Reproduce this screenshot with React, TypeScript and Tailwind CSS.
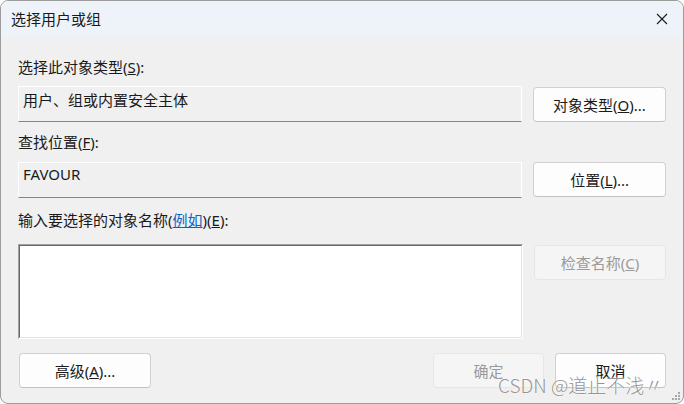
import React from "react";

const font = { fontFamily: '"Noto Sans", "Noto Sans CJK SC", sans-serif' };

function Btn({ children, w, disabled }: { children: React.ReactNode; w: string; disabled?: boolean }) {
  return (
    <div
      className={`${w} h-[35px] flex items-center justify-center rounded-[4px] border text-[15px] leading-5 ${
        disabled
          ? "bg-[#f5f5f5] border-[#e6e6e6] text-[#9a9a9a]"
          : "bg-[#fdfdfd] border-[#d0d0d0] border-b-[#c2c2c2] text-[#1a1a1a]"
      }`}
    >
      {children}
    </div>
  );
}

export default function App() {
  return (
    <div className="w-[684px] h-[404px] bg-white" style={font}>
      <div className="relative w-[684px] h-[404px] rounded-[8px] border border-[#9c9c9c] bg-[#f0f0f0] overflow-hidden text-[#1a1a1a]">
        {/* Title bar */}
        <div className="h-[36px] bg-[#eef2f9] flex items-center justify-between pl-[10px] pr-[14px]">
          <span className="text-[15px] leading-5">选择用户或组</span>
          <svg width="12" height="12" viewBox="0 0 12 12" className="mr-[1px]">
            <path d="M1 1 L11 11 M11 1 L1 11" stroke="#1a1a1a" strokeWidth="1.1" fill="none" />
          </svg>
        </div>

        <div className="pl-[17px] pr-[17px]">
          <div className="mt-[20px] h-5 text-[15px] leading-5">
            选择此对象类型(<u>S</u>):
          </div>
          <div className="mt-[9px] flex gap-[11px] items-start">
            <div className="w-[505px] h-[36px] border-t border-l border-r border-t-white border-l-white border-r-white border-b border-b-[#858585] pl-[4px] pt-[3px] text-[15px] leading-5">
              用户、组或内置安全主体
            </div>
            <div className="mt-[1px]">
              <Btn w="w-[133px]">
                对象类型(<u>O</u>)...
              </Btn>
            </div>
          </div>

          <div className="mt-[10px] h-5 text-[15px] leading-5">
            查找位置(<u>F</u>):
          </div>
          <div className="mt-[10px] flex gap-[11px] items-start">
            <div className="w-[505px] h-[36px] border-t border-l border-r border-t-white border-l-white border-r-white border-b border-b-[#858585] pl-[4px] pt-[1px] text-[15px] leading-5">
              FAVOUR
            </div>
            <Btn w="w-[133px]">
              位置(<u>L</u>)...
            </Btn>
          </div>

          <div className="mt-[12px] h-5 text-[15px] leading-5">
            输入要选择的对象名称(<span className="text-[#0a64c8] underline">例如</span>)(<u>E</u>):
          </div>
          <div className="mt-[14px] flex gap-[11px] items-start">
            <div className="w-[506px] h-[95px] border-t border-l border-t-[#a0a0a0] border-l-[#a0a0a0] border-r border-b border-r-white border-b-white">
              <div className="w-full h-full bg-white border-t border-l border-t-[#696969] border-l-[#696969] border-r border-b border-r-[#e3e3e3] border-b-[#e3e3e3]" />
            </div>
            <div className="mt-[1px]">
              <Btn w="w-[132px]" disabled>
                检查名称(<u>C</u>)
              </Btn>
            </div>
          </div>

          <div className="mt-[14px] flex items-start">
            <div className="ml-[1px]">
              <Btn w="w-[132px]">
                高级(<u>A</u>)...
              </Btn>
            </div>
            <div className="ml-auto flex gap-[11px]">
              <Btn w="w-[111px]" disabled>
                确定
              </Btn>
              <Btn w="w-[111px]">取消</Btn>
            </div>
          </div>
        </div>

        {/* resize grip */}
        <svg width="10" height="10" viewBox="0 0 10 10" className="absolute right-[2px] bottom-[2px]">
          {[
            [8, 2],
            [5, 5],
            [8, 5],
            [2, 8],
            [5, 8],
            [8, 8],
          ].map(([x, y], i) => (
            <rect key={i} x={x - 1} y={y - 1} width="2" height="2" fill="#a8a8a8" />
          ))}
        </svg>

        {/* watermark */}
        <div
          className="absolute left-[497px] top-[372px] text-[19px] leading-6 font-light text-[#959595] whitespace-nowrap"
          style={{ fontFamily: '"Noto Sans CJK SC", sans-serif', textShadow: "0 0 2px #fff, 0 0 1px #fff" }}
        >
          CSDN @道止不浅〃
        </div>
      </div>
    </div>
  );
}
